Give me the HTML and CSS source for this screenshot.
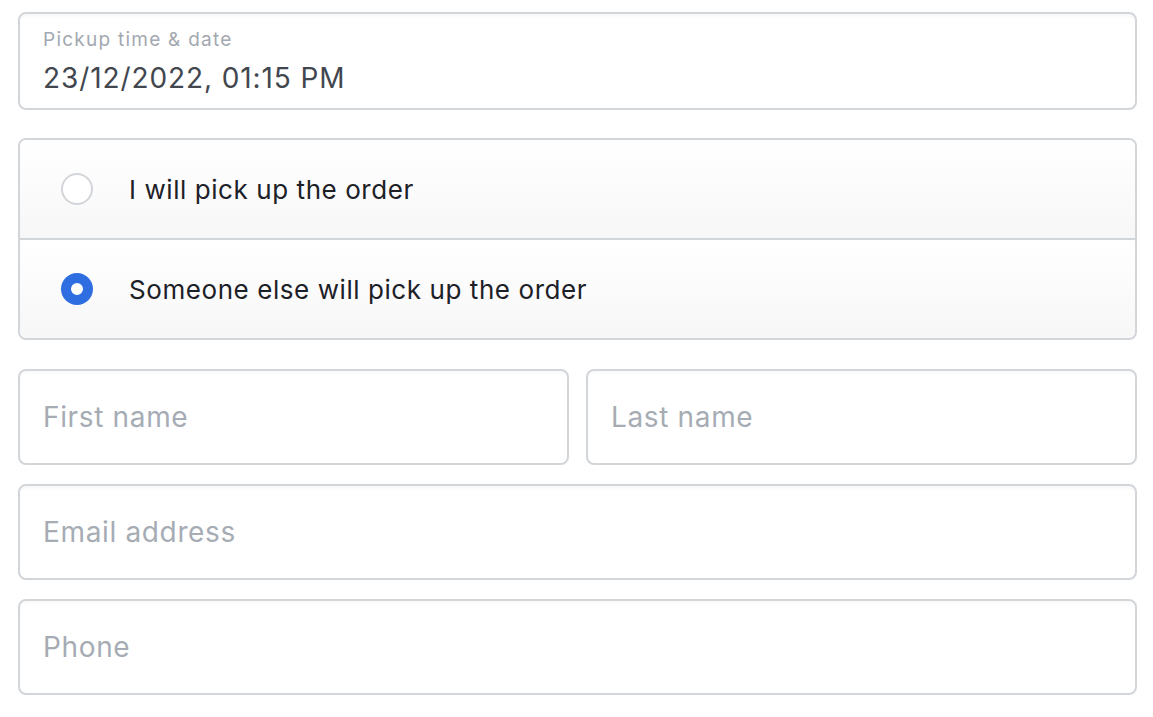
FILE: index.html
```html
<!DOCTYPE html>
<html lang="en">
  <head>
    <meta charset="UTF-8" />
    <meta name="viewport" content="width=device-width, initial-scale=1.0" />
    <title>Pickup details</title>
    <link rel="stylesheet" href="styles.css">
  </head>
  <body>
    <form class="pickup-form">
      <div class="field field-labelled">
        <label class="field-label" for="pickup-time">Pickup time &amp; date</label>
        <input class="field-input" id="pickup-time" type="text" value="23/12/2022, 01:15 PM" />
      </div>

      <div class="radio-group">
        <label class="radio-row">
          <input class="radio" type="radio" name="pickup-by" />
          <span>I will pick up the order</span>
        </label>
        <label class="radio-row">
          <input class="radio" type="radio" name="pickup-by" checked />
          <span>Someone else will pick up the order</span>
        </label>
      </div>

      <div class="name-row">
        <input class="field field-input" type="text" placeholder="First name" />
        <input class="field field-input" type="text" placeholder="Last name" />
      </div>
      <input class="field field-input" type="email" placeholder="Email address" />
      <input class="field field-input" type="tel" placeholder="Phone" />
    </form>
  </body>
</html>
```

FILE: styles.css
```css
body {
  font-family: Inter, "Noto Sans", sans-serif;
  background-color: #fff;
  margin: 0;
  padding: 12px 16px 0 18px;
}
.pickup-form {
  display: flex;
  flex-direction: column;
}
.field {
  box-sizing: border-box;
  height: 96px;
  border: 2px solid #d2d5da;
  border-radius: 8px;
  background: #fff;
  box-shadow: inset 0 4px 3px -1px rgba(0, 0, 0, 0.025);
  margin-bottom: 19px;
}
.field-input {
  display: block;
  width: 100%;
  font-family: inherit;
  font-size: 28px;
  letter-spacing: 0.65px;
  color: #42474f;
  padding: 0 23px;
  outline: none;
}
.field-input::placeholder {
  color: #a6acb4;
}
.field-labelled {
  height: 98px;
  margin-bottom: 28px;
  padding-top: 15px;
}
.field-labelled .field-input {
  border: none;
  background: transparent;
  padding: 10px 23px 0;
  box-sizing: border-box;
  letter-spacing: 0.9px;
}
.field-label {
  display: block;
  padding: 0 23px;
  font-size: 19px;
  letter-spacing: 1.25px;
  color: #a3a8b0;
  line-height: 22px;
}
.radio-group {
  border: 2px solid #d2d5da;
  border-radius: 8px;
  overflow: hidden;
  margin-bottom: 29px;
}
.radio-row {
  display: flex;
  align-items: center;
  gap: 36px;
  height: 98px;
  padding-left: 41px;
  font-size: 26px;
  letter-spacing: 0.57px;
  color: #1d2127;
  background: linear-gradient(#fff, #f7f7f8);
}
.radio-row + .radio-row {
  border-top: 2px solid #d2d5da;
}
.radio {
  appearance: none;
  margin: 0;
  width: 32px;
  height: 32px;
  border-radius: 50%;
  border: 2px solid #d2d5d9;
  background: #fff;
}
.radio:checked {
  border: 10px solid #2f6ee0;
  background: #fff;
}
.name-row {
  display: flex;
  gap: 17px;
}
.name-row .field {
  flex: 1;
  min-width: 0;
}
```
